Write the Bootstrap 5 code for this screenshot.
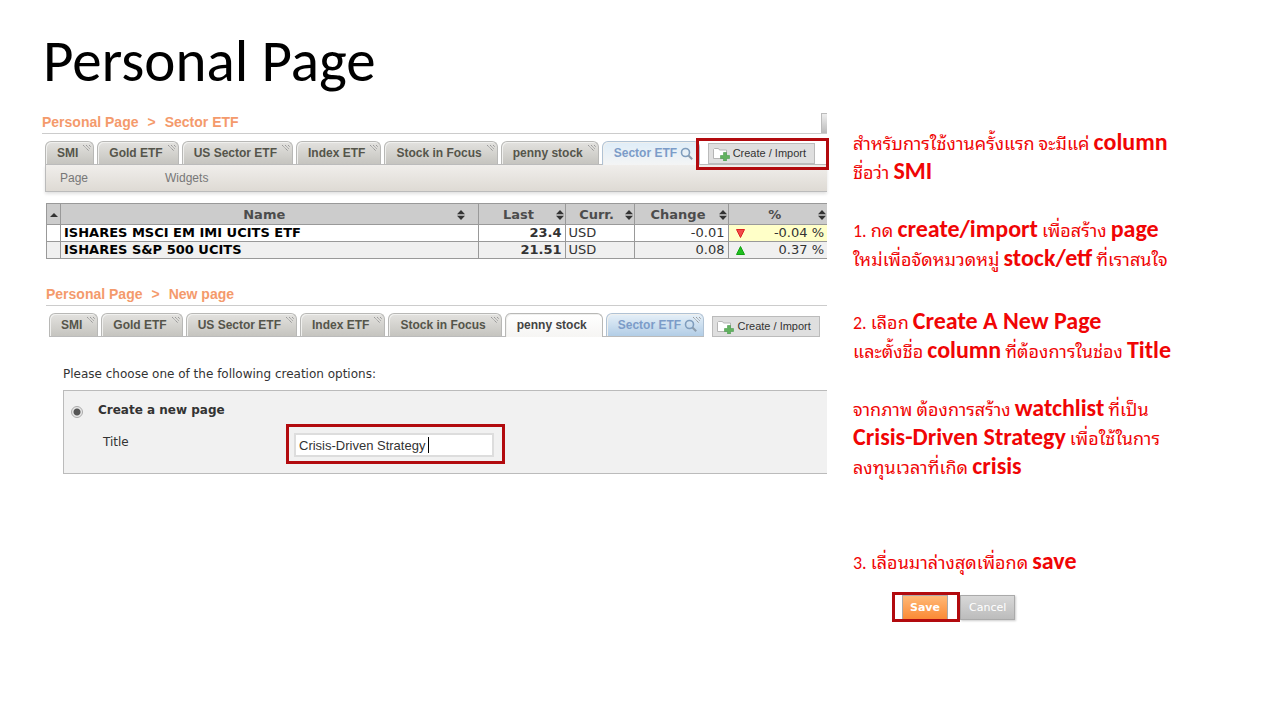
<!DOCTYPE html>
<html lang="th">
<head>
<meta charset="utf-8">
<meta name="viewport" content="width=device-width, initial-scale=1">
<title>Personal Page</title>
<link href="https://cdn.jsdelivr.net/npm/bootstrap@5.3.0/dist/css/bootstrap.min.css" rel="stylesheet">
<style>
  body { background: #fff; color: #333; font-family: "Liberation Sans", Arial, sans-serif; font-size: 12px; line-height: 16px; }
  .slide { padding: 25px 74px 40px 42px; }
  .slide-title { font-family: Carlito, Calibri, "Noto Sans", sans-serif; font-weight: 300; font-size: 59px; line-height: 72px; color: #000; margin: 0 0 16px 1px; }
  .slide-grid { display: grid; grid-template-columns: 785fr 353fr; column-gap: 26px; }
  .slide-grid > * { min-width: 0; }
  .crumbs { height: 21px; border-bottom: 1px solid #ccc; font-size: 14px; line-height: 18px; font-weight: 700; }
  .crumbs, .crumbs a { color: #f49a6c; text-decoration: none; }
  .crumbs .crumb-sep { padding: 0 9px; }
  .crumbs .scroll-end { width: 6px; border: 1px solid #bbb; border-width: 1px 0 0 1px; background: linear-gradient(#eee, #bbb); }
  .new-page { margin: 26px 0 28px 4px; }
  .tab-row { padding: 7px 0 0 3px; }
  .tab-strip { gap: 3px; border-bottom: 1px solid #bbb; height: 24px; }
  .page-tab { position: relative; height: 23px; padding: 0 15px 0 11px; border: 1px solid #b8b8b6; border-bottom: 0; border-radius: 6px 6px 0 0; background: linear-gradient(#e3e2df, #c5c4bf); color: #55554b; font-weight: 700; line-height: 22px; white-space: nowrap; text-decoration: none; box-shadow: inset 1px 1px 0 #f0f0ee; }
  .page-tab .grip { position: absolute; top: 2px; right: 2px; }
  .tab-blue { background: linear-gradient(#e6f0f8, #b2cde6); border-color: #b0c2d4; color: #7c9cc8; padding-right: 6px; }
  .tab-blue.tab-open { background: linear-gradient(#dfedf8, #f4f5f5); height: 24px; }
  .tab-plain { background: linear-gradient(#fff, #f6f5f3); color: #444; height: 24px; }
  .create-btn { height: 21px; border: 1px solid #bbb; background: #dfdfdf; color: #333; font-size: 11px; line-height: 19px; padding: 0 8px 0 4px; white-space: nowrap; gap: 3px; }
  .marked { position: relative; }
  .marked::after { content: ""; position: absolute; border: 3px solid #b20a0e; pointer-events: none; }
  .marked-create::after { inset: -5px -10px -6px -12px; }
  .marked-title::after { inset: -9px -11px -7px -8px; }
  .marked-save::after { inset: -3px -12px -2px -10px; z-index: 2; }
  .sub-nav { margin-left: 3px; height: 27px; border: 1px solid #bbb; border-width: 0 0 1px 1px; background: linear-gradient(#f0eeeb, #dedad4); box-shadow: 0 2px 3px #e2e2e2; padding: 5px 14px; gap: 77px; }
  .sub-nav a { color: #777; text-decoration: none; }
  .quotes { width: calc(100% - 4px); margin: 11px 0 0 4px; table-layout: fixed; border-collapse: collapse; font: 13px/16px "DejaVu Sans", Verdana, sans-serif; }
  .quotes th, .quotes td { border: 1px solid #999; padding: 0 3px; height: 17px; white-space: nowrap; }
  .quotes tr > :last-child { border-right: 0; }
  .quotes th { height: 21px; background: #ccc; color: #4c4c4c; text-align: center; padding: 1px 1px 0 3px; }
  .quotes .striped { background: #f0f0f0; }
  .quotes .fund { color: #000; font-weight: 700; }
  .quotes .drop { background: #ffffc8; }
  .form-text-line { font: 12px/18px "DejaVu Sans", Verdana, sans-serif; margin: 0 0 0 21px; }
  .create-panel { margin: 7px 0 0 21px; height: 84px; border: 1px solid #bbb; border-right: 0; background: #f1f1f1; padding: 10px 0 0 7px; }
  .create-panel label { font: 12px/18px "DejaVu Sans", Verdana, sans-serif; }
  .create-panel label.fw-bold { font-weight: 700; }
  .create-panel input[type=radio] { appearance: none; width: 12px; height: 12px; margin: 5px 15px 0 0; border: 1px solid #aaa; border-radius: 50%; background: radial-gradient(circle, #555 0 3px, #e8e8e8 4px); }
  .title-row { padding: 14px 0 0 32px; }
  .title-label { width: 191px; }
  .title-box { width: 200px; height: 24px; border: 2px solid #ddd; padding: 0 3px; font-size: 13px; color: #333; background: #fff; border-radius: 0; outline: 0; }
  .caret { position: absolute; left: 134px; top: 4px; width: 1px; height: 16px; background: #000; }
  .notes { color: #f00505; font-family: Carlito, Calibri, "Noto Sans Thai Looped", "Loma", "Garuda", "Waree", "Noto Sans Thai", sans-serif; font-size: 18px; line-height: 29px; padding-top: 17px; }
  .notes p { margin: 0; white-space: nowrap; height: 29px; }
  .notes b { font-size: 24px; line-height: 1; }
  .step { margin-top: 34px; }
  .step-save { margin-top: 66px; }
  .save-row { margin: 17px 0 0 49px; gap: 12px; }
  .form-btn { height: 25px; border: 1px solid #aaa; font: 700 11px/22px "DejaVu Sans", Verdana, sans-serif; color: #fff; padding: 0 7px; }
  .save-btn { background: linear-gradient(#ffb876, #fb8a35); }
  .cancel-btn { background: linear-gradient(#d8d8d8, #bcbcbc); box-shadow: 1px 1px 2px #ccc; font-weight: 400; padding: 0 8px; }
</style>
</head>
<body>
<svg width="0" height="0" class="position-absolute" aria-hidden="true">
  <symbol id="grip" viewBox="0 0 8 8"><path d="M0 1l6 6M3 1l4 4M6 1l2 2" stroke="#999" stroke-dasharray="1.4 .5" fill="none"/></symbol>
  <symbol id="lens" viewBox="0 0 13 13"><circle cx="5.5" cy="5.5" r="4" fill="none" stroke="#7f9dbd" stroke-width="1.6"/><path d="M8.5 8.5l3.7 3.7" stroke="#8c9dad" stroke-width="2"/></symbol>
  <symbol id="folder" viewBox="0 0 17 14"><path d="M.5 11.5v-9l1-1h4l1 1.500h7v8.500z" fill="#fff" stroke="#b5b5b5"/><path d="M10.500 5.500h3v3h3v3h-3v2.500h-3v-2.500h-3v-3h3z" fill="#62b25f" stroke="#4c9a50" stroke-width=".6"/></symbol>
  <symbol id="sort" viewBox="0 0 8 10"><path d="M0 4.300L4 0l4 4.300zM0 5.700L4 10l4-4.300z" fill="#333"/></symbol>
</svg>

<main class="slide container-fluid">
  <h1 class="slide-title">Personal Page</h1>
  <div class="slide-grid">
    <div>
      <section>
        <div class="crumbs d-flex"><a href="#">Personal Page</a><span class="crumb-sep">&gt;</span><a href="#">Sector ETF</a><span class="scroll-end ms-auto"></span></div>
        <div class="tab-row d-flex">
          <nav class="tab-strip d-flex flex-grow-1">
            <a class="page-tab" href="#">SMI<svg class="grip" width="8" height="8"><use href="#grip"/></svg></a>
            <a class="page-tab" href="#">Gold ETF<svg class="grip" width="8" height="8"><use href="#grip"/></svg></a>
            <a class="page-tab" href="#">US Sector ETF<svg class="grip" width="8" height="8"><use href="#grip"/></svg></a>
            <a class="page-tab" href="#">Index ETF<svg class="grip" width="8" height="8"><use href="#grip"/></svg></a>
            <a class="page-tab" href="#">Stock in Focus<svg class="grip" width="8" height="8"><use href="#grip"/></svg></a>
            <a class="page-tab" href="#">penny stock<svg class="grip" width="8" height="8"><use href="#grip"/></svg></a>
            <a class="page-tab tab-blue tab-open" href="#">Sector ETF <svg width="13" height="13"><use href="#lens"/></svg></a>
            <span class="marked marked-create ms-auto me-2 align-self-end pe-1"><button class="create-btn d-flex align-items-center" type="button"><svg width="17" height="14"><use href="#folder"/></svg>Create / Import</button></span>
          </nav>
        </div>
        <nav class="sub-nav d-flex"><a href="#">Page</a><a href="#">Widgets</a></nav>
        <table class="quotes">
          <colgroup><col style="width:14px"><col><col style="width:87px"><col style="width:69px"><col style="width:94px"><col style="width:99px"></colgroup>
          <thead>
            <tr>
              <th aria-label="Order"><svg class="d-block" width="8" height="4" viewBox="0 0 8 4"><path d="M0 4l4-4 4 4z" fill="#333"/></svg></th>
              <th><span class="d-flex align-items-center ps-2 pe-2"><span class="flex-grow-1">Name</span><svg class="me-1" width="8" height="10"><use href="#sort"/></svg></span></th>
              <th><span class="d-flex align-items-center"><span class="flex-grow-1">Last</span><svg width="8" height="10"><use href="#sort"/></svg></span></th>
              <th><span class="d-flex align-items-center"><span class="flex-grow-1">Curr.</span><svg width="8" height="10"><use href="#sort"/></svg></span></th>
              <th><span class="d-flex align-items-center"><span class="flex-grow-1">Change</span><svg width="8" height="10"><use href="#sort"/></svg></span></th>
              <th><span class="d-flex align-items-center"><span class="flex-grow-1">%</span><svg width="8" height="10"><use href="#sort"/></svg></span></th>
            </tr>
          </thead>
          <tbody>
            <tr><td></td><td class="fund">ISHARES MSCI EM IMI UCITS ETF</td><td class="text-end fw-bold">23.4</td><td>USD</td><td class="text-end">-0.01</td><td class="drop"><span class="d-flex justify-content-between align-items-center"><svg class="ms-1" width="9" height="9" viewBox="0 0 9 9"><path d="M.5.5h8l-4 8z" fill="#f24a4a" stroke="#d22"/></svg>-0.04 %</span></td></tr>
            <tr class="striped"><td></td><td class="fund">ISHARES S&amp;P 500 UCITS</td><td class="text-end fw-bold">21.51</td><td>USD</td><td class="text-end">0.08</td><td><span class="d-flex justify-content-between align-items-center"><svg class="ms-1" width="9" height="9" viewBox="0 0 9 9"><path d="M.5 8.500h8l-4-8z" fill="#1fc01f" stroke="#12a012"/></svg>0.37 %</span></td></tr>
          </tbody>
        </table>
      </section>

      <section class="new-page">
        <div class="crumbs d-flex"><a href="#">Personal Page</a><span class="crumb-sep">&gt;</span><a href="#">New page</a></div>
        <div class="tab-row d-flex">
          <nav class="tab-strip d-flex">
            <a class="page-tab" href="#">SMI<svg class="grip" width="8" height="8"><use href="#grip"/></svg></a>
            <a class="page-tab" href="#">Gold ETF<svg class="grip" width="8" height="8"><use href="#grip"/></svg></a>
            <a class="page-tab" href="#">US Sector ETF<svg class="grip" width="8" height="8"><use href="#grip"/></svg></a>
            <a class="page-tab" href="#">Index ETF<svg class="grip" width="8" height="8"><use href="#grip"/></svg></a>
            <a class="page-tab" href="#">Stock in Focus<svg class="grip" width="8" height="8"><use href="#grip"/></svg></a>
            <a class="page-tab tab-plain" href="#">penny stock</a>
            <a class="page-tab tab-blue" href="#">Sector ETF <svg width="13" height="13"><use href="#lens"/></svg><svg class="grip" width="8" height="8"><use href="#grip"/></svg></a>
          </nav>
          <button class="create-btn d-flex align-items-center ms-2 align-self-end" type="button"><svg width="17" height="14"><use href="#folder"/></svg>Create / Import</button>
        </div>
      </section>
      <form>
        <p class="form-text-line">Please choose one of the following creation options:</p>
        <div class="create-panel">
          <div class="d-flex"><input type="radio" id="create-new" name="creation" checked><label class="fw-bold" for="create-new">Create a new page</label></div>
          <div class="title-row d-flex">
            <label class="title-label" for="page-title">Title</label>
            <span class="marked marked-title"><input class="title-box d-block" id="page-title" type="text" value="Crisis-Driven Strategy"><span class="caret"></span></span>
          </div>
        </div>
      </form>
    </div>

    <div class="notes">
      <p>สำหรับการใช้งานครั้งแรก จะมีแค่ <b>column</b></p>
      <p>ชื่อว่า <b>SMI</b></p>
      <p><br></p>
      <p>1. กด <b>create/import</b> เพื่อสร้าง <b>page</b></p>
      <p>ใหม่เพื่อจัดหมวดหมู่ <b>stock/etf</b> ที่เราสนใจ</p>
      <div class="step">
        <p>2. เลือก <b>Create A New Page</b></p>
        <p>และตั้งชื่อ <b>column</b> ที่ต้องการในช่อง <b>Title</b></p>
        <p><br></p>
        <p>จากภาพ ต้องการสร้าง <b>watchlist</b> ที่เป็น</p>
        <p><b>Crisis-Driven Strategy</b> เพื่อใช้ในการ</p>
        <p>ลงทุนเวลาที่เกิด <b>crisis</b></p>
      </div>
      <div class="step-save">
        <p>3. เลื่อนมาล่างสุดเพื่อกด <b>save</b></p>
        <div class="d-flex save-row">
          <span class="marked marked-save d-flex"><button class="form-btn save-btn" type="button">Save</button></span>
          <button class="form-btn cancel-btn" type="button">Cancel</button>
        </div>
      </div>
    </div>
  </div>
</main>
<script src="https://cdn.jsdelivr.net/npm/bootstrap@5.3.0/dist/js/bootstrap.bundle.min.js"></script>
</body>
</html>
